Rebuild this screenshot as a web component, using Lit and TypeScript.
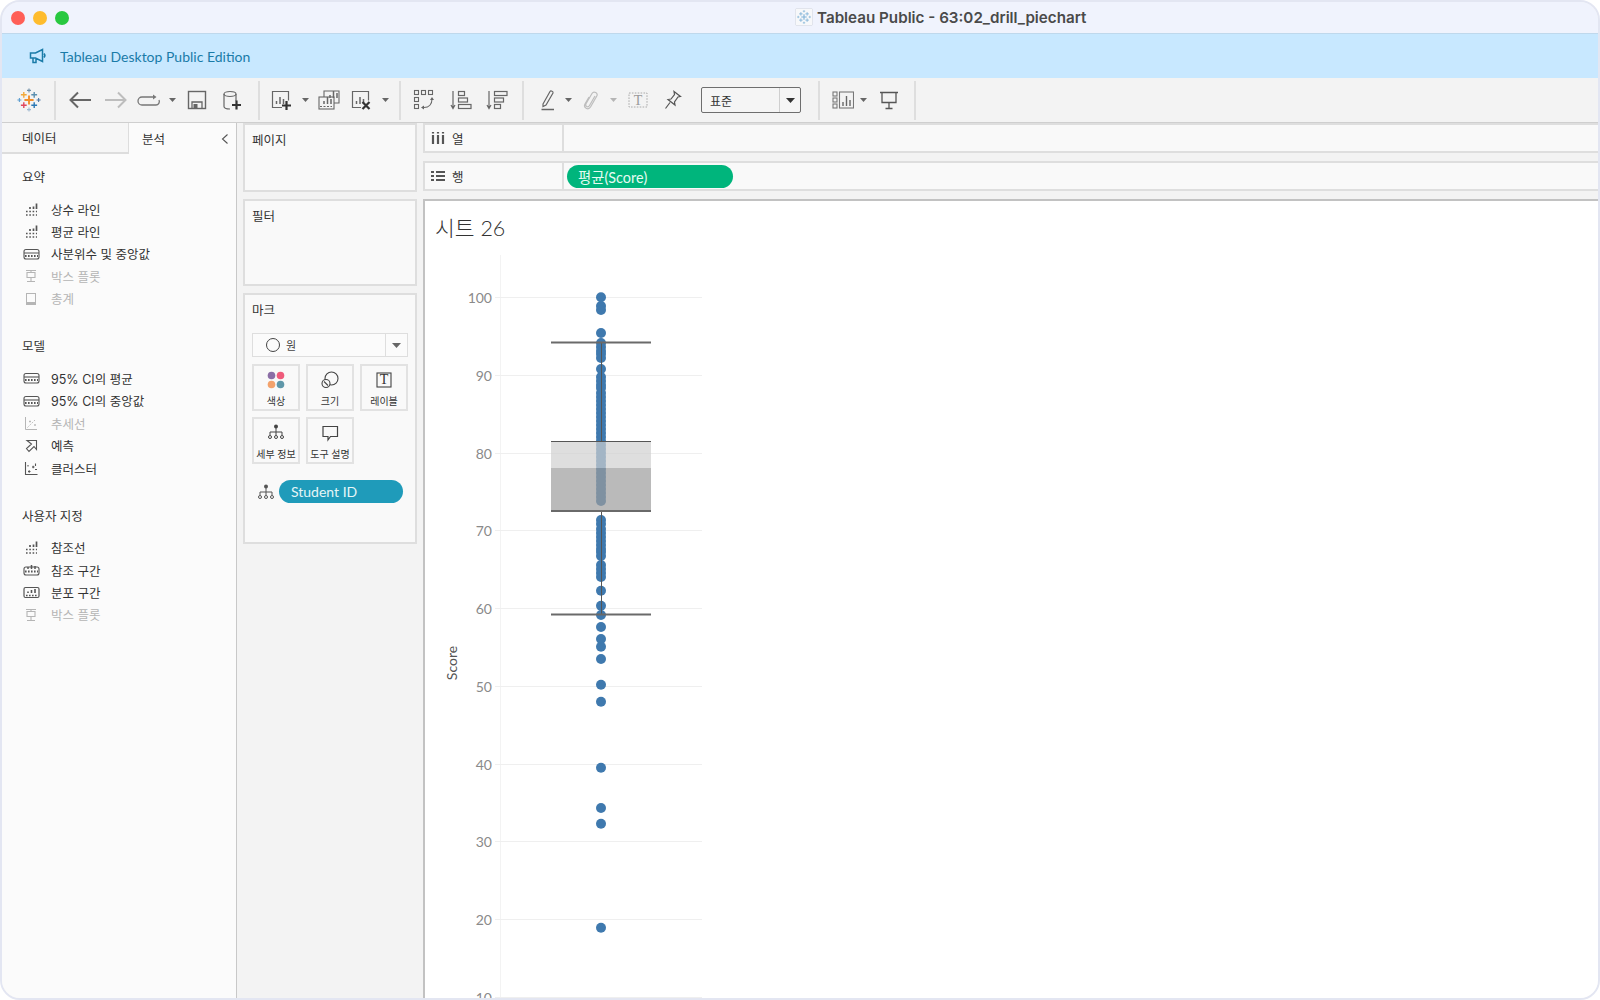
import { LitElement, html, css, svg } from "lit";
import { customElement } from "lit/decorators.js";

const S = (w: number, h: number, body: unknown) => html`<svg width=${w} height=${h} viewBox="0 0 ${w} ${h}" fill="none" stroke="currentColor">${body}</svg>`;

const tabLogo = (col: (i: number) => string, k = 1) => {
  const cross = (x: number, y: number, r: number, w: number, c: string) =>
    svg`<path d="M${x - r} ${y}h${2 * r}M${x} ${y - r}v${2 * r}" stroke=${c} stroke-width=${w}/>`;
  return svg`<g transform="scale(${k})">
    ${cross(12, 12, 4.6, 1.9, col(0))}
    ${cross(12, 2.4, 2, 1.1, col(1))}
    ${cross(6.8, 6.8, 2.9, 1.4, col(2))}
    ${cross(17.2, 6.8, 2.9, 1.4, col(3))}
    ${cross(2.4, 12, 2, 1.1, col(4))}
    ${cross(21.6, 12, 2, 1.1, col(5))}
    ${cross(6.8, 17.2, 2.9, 1.4, col(6))}
    ${cross(17.2, 17.2, 2.9, 1.4, col(7))}
    ${cross(12, 21.6, 2, 1.1, col(8))}
  </g>`;
};
const logoColors = ["#f28e2b", "#6f8fa8", "#f2a93b", "#5b8fb0", "#5f9fd0", "#4e79a7", "#e0475e", "#2a78b5", "#9fb8d0"];

const caret = S(7, 4, svg`<path d="M0 0h7L3.5 4z" fill="#666" stroke="none"/>`);
const caretLight = S(7, 4, svg`<path d="M0 0h7L3.5 4z" fill="#b5b5b5" stroke="none"/>`);
const bars = (x: number, y: number) => svg`<path d="M${x} ${y}v-3M${x + 3.5} ${y}v-7M${x + 7} ${y}v-5" stroke-width="1.5"/>`;
const plus = (x: number, y: number) => svg`<path d="M${x - 4.5} ${y}h9M${x} ${y - 4.5}v9" stroke="#333" stroke-width="2.2"/>`;

const tools: [number, unknown, string?][] = [
  [0, S(24, 24, tabLogo((i) => logoColors[i])), "w24"],
  [13, null, "sep"],
  [12, S(24, 18, svg`<path d="M23 9H3M10 1.5 2.5 9l7.5 7.5" stroke="#666" stroke-width="2"/>`), "w24"],
  [12, S(24, 18, svg`<path d="M1 9h20M14 1.5 21.5 9 14 16.5" stroke="#bdbdbd" stroke-width="2"/>`), "w24"],
  [9, S(24, 12, svg`<path d="M17 3H5a3.5 3.5 0 0 0 0 8h14a3.5 3.5 0 0 0 3-5" stroke="#777" stroke-width="1.3"/><path d="M16 0.5 19.5 3 16 5.5z" fill="#777" stroke="none"/>`), "w24"],
  [8, caret, "w7"],
  [11, S(20, 20, svg`<rect x="1.5" y="1.5" width="17" height="17" stroke="#666" stroke-width="1.4"/><path d="M5 18v-6h10v6" stroke="#666" stroke-width="1.3"/><rect x="6.5" y="14" width="4" height="4" fill="#666" stroke="none"/>`), "w20"],
  [15, S(20, 20, svg`<g stroke="#666" stroke-width="1.2"><ellipse cx="8" cy="4" rx="6" ry="2.5"/><path d="M2 4v12.5c0 1.5 3 2.5 6 2.5M14 4v7"/></g>${plus(14.5, 15)}`), "w20"],
  [16, null, "sep"],
  [10, S(22, 22, svg`<g stroke="#666"><path d="M12 18.5H2.5v-16h16v9" stroke-width="1.2"/>${bars(6.5, 15)}</g>${plus(16.5, 16.5)}`), "w22"],
  [9.5, caret, "w7"],
  [9.5, S(22, 22, svg`<g stroke="#666" stroke-width="1.1"><path d="M6 8V2h15v12h-5"/><rect x="1" y="8" width="15" height="12"/><path d="M2 17.5h12" stroke-dasharray="2 1.5"/></g><g stroke="#666">${bars(6, 15)}${bars(12, 9)}</g>`), "w22"],
  [10, S(22, 22, svg`<g stroke="#666"><path d="M11 18.5H2.5v-16h16v9" stroke-width="1.2"/>${bars(6.5, 15)}</g><path d="M12.5 13l7 7M19.5 13l-7 7" stroke="#333" stroke-width="2.2"/>`), "w22"],
  [9.5, caret, "w7"],
  [10.5, null, "sep"],
  [12, S(22, 22, svg`<g stroke="#666" stroke-width="1.1"><rect x="1.5" y="1.5" width="4" height="4"/><rect x="8.5" y="1.5" width="4" height="4"/><rect x="15.5" y="1.5" width="4" height="4"/><rect x="1.5" y="8.5" width="4" height="4"/><rect x="1.5" y="15.5" width="4" height="4"/><path d="M19 10c0 5-3 8.5-8 8.5"/></g><path d="M17 11l2-3 2 3zM11 16.5l-3 2 3 2z" fill="#666" stroke="none"/>`), "w22"],
  [15, S(22, 22, svg`<g stroke="#666" stroke-width="1.2"><path d="M3 2v17M1 16l2 3.5L5 16"/><rect x="8.5" y="2.5" width="6" height="4"/><rect x="8.5" y="9" width="9" height="4"/><rect x="8.5" y="15.5" width="12.5" height="4"/></g>`), "w22"],
  [14, S(22, 22, svg`<g stroke="#666" stroke-width="1.2"><path d="M3 2v17M1 16l2 3.5L5 16"/><rect x="8.5" y="2.5" width="12.5" height="4"/><rect x="8.5" y="9" width="9" height="4"/><rect x="8.5" y="15.5" width="6" height="4"/></g>`), "w22"],
  [14, null, "sep"],
  [16, S(16, 22, svg`<path d="M3 15 10 2.5c.8-1.2 3.5 0 3 1.5L6 16l-3 1.5z" stroke="#666" stroke-width="1.2"/><path d="M1.5 20.5h12.5" stroke="#666" stroke-width="1.5"/>`), "w16"],
  [8.5, caret, "w7"],
  [11.5, S(16, 20, svg`<path d="M12 6 6.5 15.5c-1.5 2.5-4.7.8-3.5-1.7L9 3.5c1.8-3 6.5-.4 4.8 2.5L7.5 17c-2.3 3.7-7.5.7-5.5-3L6 7" stroke="#bdbdbd" stroke-width="1.2"/>`), "w16"],
  [10.5, caretLight, "w7"],
  [11.5, S(20, 16, svg`<rect x="1" y="1" width="18" height="14" stroke="#aaa" stroke-dasharray="1.6 1.3"/><text x="10" y="12.5" text-anchor="middle" class="t" fill="#999" stroke="none">T</text>`), "w20"],
  [16, S(18, 20, svg`<path d="M10 1.5l6.5 5-2.5.5-3.5 5 .5 3-7-5.5 3-.5 3.5-4.5zM6 12.5 1.5 18.5" stroke="#555" stroke-width="1.2"/>`), "w18"],
  [19, "select", ""],
  [17, null, "sep"],
  [12, S(22, 18, svg`<g stroke="#777" stroke-width="1.1"><rect x="1" y="1" width="4" height="4"/><rect x="1" y="7" width="4" height="4"/><rect x="1" y="13" width="4" height="4"/><rect x="7.5" y="1" width="14" height="16"/></g><g stroke="#666"><path d="M11 15v-4M14.5 15V5M18 15V9" stroke-width="1.4"/></g>`), "w22"],
  [5.5, caret, "w7"],
  [12.5, S(20, 20, svg`<g stroke="#555" stroke-width="1.3"><path d="M1 2.5h18M3 2.5v10h14v-10M10 12.5v6M6.5 18.5h7"/></g>`), "w20"],
  [15, null, "sep"],
];

const I = {
  line: S(14, 13, svg`<path d="M9.5 6V3.5M12.5 6V.5M6 6V4" stroke-width="1.7"/><path d="M2 8.5h11" stroke-dasharray="1.6 1.7" stroke-width="1.7"/><path d="M2 12h11" stroke-dasharray="1.6 1.7" stroke-width="1.7"/>`),
  band: S(17, 14, svg`<rect x="1" y="2.5" width="15" height="9.5" rx="2" stroke-width="1.1"/><path d="M1 6h15" stroke-width="1.1"/><path d="M2 9h13" stroke-dasharray="1.6 1.4" stroke-width="1.8"/>`),
  box: S(14, 14, svg`<path d="M2 1.5h10M7 1.5v2M3 3.5h8v5H3zM7 8.5v4M3 12.5h8" stroke-width="1.1"/>`),
  total: S(14, 14, svg`<rect x="2.5" y="1.5" width="9" height="11" stroke-width="1"/><rect x="2.5" y="10" width="9" height="3" fill="currentColor" stroke="none"/>`),
  trend: S(14, 15, svg`<path d="M1.5 1v12.5H13" stroke-width="1"/><path d="M3.5 11.5 12 3" stroke-width="1" stroke-dasharray="1.5 1.5"/><path d="M5 5.5h2M6 4.5v2M10 9h2M11 8v2" stroke-width=".9"/>`),
  forecast: S(14, 15, svg`<path d="M3 2.5h9.5v9l-2.5-3-5 5-2.5-3 5-4.5z" stroke-width="1.1"/>`),
  cluster: S(14, 15, svg`<path d="M1.5 1v12.5H13.5" stroke-width="1.1"/><path d="M4 10.5h2.5M5.2 9.2v2.5M8 6h2.5M9.2 4.8v2.5M11 8.5h2M11.5 2.5v2.5M4 4v1.5" stroke-width="1.1"/>`),
  refband: S(17, 14, svg`<rect x="1" y="4" width="15" height="8" rx="2" stroke-width="1.1"/><path d="M5 6V4M8.5 6V2M12 6V3" stroke-width="1.5"/><path d="M2 8.5h13" stroke-dasharray="1.6 1.4" stroke-width="2.2"/>`),
  dist: S(17, 14, svg`<rect x="1" y="2.5" width="15" height="10" rx="1.5" stroke-width="1.2"/><path d="M5 8V6.5M8.5 8V5M12 8V4" stroke-width="1.6"/><path d="M3 10.5h11" stroke-dasharray="1.6 1.4" stroke-width="1.6"/>`),
  tree: S(16, 16, svg`<circle cx="8" cy="2.5" r="2" fill="currentColor" stroke="none"/><path d="M8 4v4M2 11V8h12v3M8 8v3" stroke-width="1"/><circle cx="2" cy="13" r="1.5" stroke-width="1"/><circle cx="8" cy="13" r="1.5" stroke-width="1"/><circle cx="14" cy="13" r="1.5" stroke-width="1"/>`),
};

const sections: { title: string; rows: [unknown, string, boolean?][] }[] = [
  { title: "요약", rows: [[I.line, "상수 라인"], [I.line, "평균 라인"], [I.band, "사분위수 및 중앙값"], [I.box, "박스 플롯", true], [I.total, "총계", true]] },
  { title: "모델", rows: [[I.band, "95% CI의 평균"], [I.band, "95% CI의 중앙값"], [I.trend, "추세선", true], [I.forecast, "예측"], [I.cluster, "클러스터"]] },
  { title: "사용자 지정", rows: [[I.line, "참조선"], [I.refband, "참조 구간"], [I.dist, "분포 구간"], [I.box, "박스 플롯", true]] },
];

const markBtns: [unknown, string][] = [
  [S(18, 18, svg`<circle cx="4.5" cy="4.5" r="3.8" fill="#8b6ea6" stroke="none"/><circle cx="13.5" cy="4.5" r="3.8" fill="#ef5b7b" stroke="none"/><circle cx="4.5" cy="13.5" r="3.8" fill="#f3a26c" stroke="none"/><circle cx="13.5" cy="13.5" r="3.8" fill="#5f97a9" stroke="none"/>`), "색상"],
  [S(18, 18, svg`<circle cx="10.5" cy="7.5" r="6.5" stroke-width="1.1"/><circle cx="5" cy="12.5" r="4" fill="#f9f9f9" stroke-width="1.1"/><path d="M3 10.5l4 4" stroke-width="1.1"/>`), "크기"],
  [S(18, 18, svg`<rect x="2" y="2" width="14" height="14" stroke-width="1.1"/><text x="9" y="13" text-anchor="middle" class="t" fill="#333" stroke="none">T</text>`), "레이블"],
  [I.tree, "세부 정보"],
  [S(18, 18, svg`<path d="M2 2.5h14.5v10H9.5L7 16v-3.5H2z" stroke-width="1.2"/>`), "도구 설명"],
];

const yOf = (v: number) => 297.3 + (100 - v) * 7.77;
const ticks = [100, 90, 80, 70, 60, 50, 40, 30, 20, 10];
const dense: number[] = [];
for (let y = 393; y <= 503; y += 4) dense.push(y);
const dots = [297.3, 306, 310, 333, 343, 347, 351, 354, 358, 369, 377, 381, 385, 388, ...dense, 520, 524, 529, 533, 537, 541, 545, 549, 552, 556, 565, 569, 573, 577, 590.7, 605.7, 615, 627, 639, 646.7, 659, 684.7, 701.7, 767.7, 808, 823.7, 927.7];

@customElement("app-root")
export class AppRoot extends LitElement {
  static styles = css`
    :host { display: block; width: 1600px; height: 1000px; background: #fff; font-family: "Lato", "Noto Sans CJK KR", sans-serif; color: #333; }
    .window { width: 1600px; height: 1000px; box-sizing: border-box; border: 2px solid #e3e6f2; border-radius: 20px; overflow: hidden; display: flex; flex-direction: column; background: #f3f3f3; }
    .titlebar { height: 32px; flex: none; background: #f0f3fd; border-bottom: 1px solid #bfd8ec; display: flex; align-items: center; position: relative; box-sizing: border-box; }
    .lights { display: flex; gap: 8px; padding-left: 9px; }
    .lights i { width: 14px; height: 14px; border-radius: 50%; display: block; }
    .wtitle { position: absolute; left: 794px; top: 0; height: 30px; display: flex; align-items: center; gap: 5px; font: 600 15.2px "Inter", sans-serif; color: #4a4a4a; white-space: nowrap; }
    .ticon { width: 16px; height: 16px; background: #f7f8fa; box-shadow: 0 0 1px #999; display: flex; }
    .banner { height: 44px; flex: none; background: #c8e8ff; display: flex; align-items: center; padding-left: 27px; gap: 13px; color: #1a7ba8; font-size: 14px; }
    .toolbar { height: 45px; flex: none; box-sizing: border-box; background: #f3f3f3; border-bottom: 1px solid #cfcfcf; display: flex; align-items: center; padding-left: 15px; }
    .ti { display: flex; align-items: center; justify-content: center; flex: none; }
    .w24 { width: 24px; } .w22 { width: 22px; } .w20 { width: 20px; } .w18 { width: 18px; } .w16 { width: 16px; } .w7 { width: 7px; }
    .sep { width: 2px; height: 39px; background: #dedede; }
    .t { font: 14px "Liberation Serif", serif; }
    .select { width: 100px; height: 26px; box-sizing: border-box; border: 1px solid #6e6e6e; border-radius: 2px; display: flex; align-items: center; font-size: 12px; color: #333; background: #f5f5f5; }
    .select span { flex: 1; padding-left: 8px; }
    .select b { width: 20px; height: 100%; border-left: 1px solid #cfcfcf; display: flex; align-items: center; justify-content: center; }
    .main { flex: 1; display: flex; min-height: 0; }
    .left { width: 235px; flex: none; box-sizing: border-box; background: #fbfbfb; border-right: 1px solid #c8c8c8; }
    .tabs { display: flex; height: 31px; font-size: 12.5px; }
    .tab { display: flex; align-items: center; }
    .tab.a { width: 127px; box-sizing: border-box; padding-left: 20px; background: #f6f6f6; border-right: 1.5px solid #ddd; border-bottom: 2px solid #ddd; }
    .tab.b { flex: 1; padding: 0 7px 0 13px; justify-content: space-between; }
    .list { padding: 13px 0 0 20px; }
    .sec { margin-bottom: 26.3px; }
    .sec h4 { margin: 0 0 9px; font-weight: 400; font-size: 12.5px; line-height: 22px; color: #333; }
    .row { height: 22.4px; display: flex; align-items: center; font: 12.5px "Inter", "Noto Sans CJK KR", sans-serif; color: #333; position: relative; padding-left: 29px; }
    .row .ic { position: absolute; left: 0; width: 18px; display: flex; justify-content: center; color: #555; }
    .row.off { color: #b5b5b5; } .row.off .ic { color: #b5b5b5; }
    .mid { width: 186px; flex: none; box-sizing: border-box; padding: 0 6px; display: flex; flex-direction: column; gap: 7px; }
    .card { box-sizing: border-box; border: 2px solid #dedede; background: #f9f9f9; padding: 7px; font-size: 12.5px; }
    .card.p { height: 69px; } .card.f { height: 87px; } .card.m { height: 251px; }
    .card h4 { margin: 0; font-weight: 400; font-size: 12.5px; line-height: 18px; color: #333; }
    .mtype { margin-top: 13px; height: 24px; box-sizing: border-box; border: 1.5px solid #dedede; background: #fbfbfb; display: flex; align-items: center; font-size: 11px; color: #444; }
    .mtype .c { width: 14px; height: 14px; box-sizing: border-box; border: 1.2px solid #444; border-radius: 50%; margin: 0 6px 0 13px; }
    .mtype span { flex: 1; }
    .mtype b { width: 21px; height: 100%; border-left: 1px solid #dedede; display: flex; align-items: center; justify-content: center; }
    .mgrid { margin-top: 7px; display: grid; grid-template-columns: repeat(3, 48px); grid-auto-rows: 47px; gap: 6px; }
    .mbtn { box-sizing: border-box; border: 2px solid #e2e2e2; background: #f9f9f9; display: flex; flex-direction: column; align-items: center; justify-content: space-between; padding: 5px 0 1px; font-size: 10px; color: #333; line-height: 14px; white-space: nowrap; }
    .mbtn svg { color: #444; }
    .pillrow { margin-top: 16px; display: flex; align-items: center; gap: 5px; padding-left: 6px; color: #555; }
    .pill { border-radius: 12px; display: flex; align-items: center; color: #e6f6f7; font-size: 14px; height: 23px; box-sizing: border-box; }
    .pill.b { background: #1f9bba; width: 124px; padding-left: 12px; }
    .right { flex: 1; min-width: 0; display: flex; flex-direction: column; }
    .shelf { height: 30px; flex: none; box-sizing: border-box; border: 2px solid #dedede; border-right: none; background: #f9f9f9; display: flex; margin-bottom: 8px; }
    .shelf .lab { width: 139px; flex: none; box-sizing: border-box; border-right: 2px solid #dedede; display: flex; align-items: center; padding-left: 6px; gap: 7px; font-size: 12.5px; color: #333; }
    .shelf .lab svg { color: #555; }
    .shelf .val { flex: 1; display: flex; align-items: center; padding-left: 3px; }
    .pill.g { background: #00b57c; width: 166px; padding-left: 11px; color: #e6fbf2; font-size: 14.4px; }
    .view { flex: 1; min-height: 0; box-sizing: border-box; border: 2px solid #c2c2c2; border-width: 2px 0 0 2px; background: #fff; overflow: hidden; }
    .vt { font-size: 21.5px; font-weight: 300; color: #333; line-height: 30px; padding: 12px 0 0 10px; height: 50px; box-sizing: border-box; }
    .chart { display: block; }
    .al { font: 14px "Lato", sans-serif; fill: #8a8a8a; }
    .st { font: 14px "Lato", sans-serif; fill: #555; }
  `;

  render() {
    return html`<div class="window">
      <div class="titlebar">
        <div class="lights"><i style="background:#ff5f57"></i><i style="background:#febc2e"></i><i style="background:#28c840"></i></div>
        <div class="wtitle"><span class="ticon">${S(16, 16, svg`<g transform="translate(.8 .8)">${tabLogo(() => "#7fb2d8", 0.6)}</g>`)}</span>Tableau Public - 63:02_drill_piechart</div>
      </div>
      <div class="banner">
        ${S(18, 16, svg`<path d="M1.5 5h5l7-3.5v12l-7-3.5h-5zM4 10v4.5h3V10M15 5.5a3 3 0 0 1 0 4" stroke="#1a7ba8" stroke-width="1.5"/>`)}
        <span>Tableau Desktop Public Edition</span>
      </div>
      <div class="toolbar">
        ${tools.map(([ml, c, cls]) =>
          c === "select"
            ? html`<div class="select" style="margin-left:${ml}px"><span>표준</span><b>${S(9, 5, svg`<path d="M0 0h9L4.5 5z" fill="#333" stroke="none"/>`)}</b></div>`
            : c === null
              ? html`<div class="ti sep" style="margin-left:${ml}px"></div>`
              : html`<div class="ti ${cls}" style="margin-left:${ml}px">${c}</div>`
        )}
      </div>
      <div class="main">
        <aside class="left">
          <div class="tabs">
            <div class="tab a">데이터</div>
            <div class="tab b">분석 ${S(8, 12, svg`<path d="M6.5 1.5 1.5 6l5 4.5" stroke="#555" stroke-width="1.1"/>`)}</div>
          </div>
          <div class="list">
            ${sections.map((s) => html`<div class="sec"><h4>${s.title}</h4>
              ${s.rows.map(([ic, t, off]) => html`<div class="row ${off ? "off" : ""}"><span class="ic">${ic}</span>${t}</div>`)}
            </div>`)}
          </div>
        </aside>
        <section class="mid">
          <div class="card p"><h4>페이지</h4></div>
          <div class="card f"><h4>필터</h4></div>
          <div class="card m">
            <h4>마크</h4>
            <div class="mtype"><i class="c"></i><span>원</span><b>${S(9, 5, svg`<path d="M0 0h9L4.5 5z" fill="#666" stroke="none"/>`)}</b></div>
            <div class="mgrid">${markBtns.map(([ic, t]) => html`<div class="mbtn">${ic}<span>${t}</span></div>`)}</div>
            <div class="pillrow">${I.tree}<div class="pill b">Student ID</div></div>
          </div>
        </section>
        <section class="right">
          <div class="shelf"><div class="lab">${S(14, 14, svg`<path d="M2 4v9M7 4v9M12 4v9" stroke-width="2.2"/><path d="M2 1v1.5M7 1v1.5M12 1v1.5" stroke-width="2.2"/>`)}<span>열</span></div><div class="val"></div></div>
          <div class="shelf"><div class="lab">${S(14, 14, svg`<path d="M5 3h9M5 7h9M5 11h9M0 3h3M0 7h3M0 11h3" stroke-width="1.8"/>`)}<span>행</span></div><div class="val"><div class="pill g">평균(Score)</div></div></div>
          <div class="view">
            <div class="vt">시트 26</div>
            <svg class="chart" width="300" height="747" viewBox="425 251 300 747">
              <path d="M500.5 255V998" stroke="#f3f3f3"/>
              ${ticks.map((t) => svg`<path d="M495 ${Math.round(yOf(t)) + 0.5}H702" stroke="#efefef"/>
                <text x="492" y=${yOf(t) + 6} text-anchor="end" class="al">${t}</text>`)}
              <text transform="translate(457 663) rotate(-90)" text-anchor="middle" class="st">Score</text>
              ${dots.map((y) => svg`<circle cx="601" cy=${y} r="5" fill="#3f79ae"/>`)}
              <rect x="551" y="441" width="100" height="27" fill="rgb(207,207,207)" fill-opacity=".693"/>
              <rect x="551" y="468" width="100" height="43" fill="rgb(155,155,155)" fill-opacity=".693"/>
              <path d="M601.5 342V441M601.5 511V614" stroke="#555"/>
              <path d="M551 441.5H651" stroke="#555"/>
              <path d="M551 511H651M551 342.5H651M551 614.5H651" stroke="#6a6a6a" stroke-width="2"/>
            </svg>
          </div>
        </section>
      </div>
    </div>`;
  }
}
